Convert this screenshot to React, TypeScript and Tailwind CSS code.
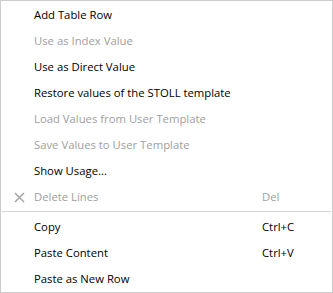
import React from "react";

type Item = { label: string; disabled?: boolean; shortcut?: string; icon?: boolean } | "sep";

const items: Item[] = [
  { label: "Add Table Row" },
  { label: "Use as Index Value", disabled: true },
  { label: "Use as Direct Value" },
  { label: "Restore values of the STOLL template" },
  { label: "Load Values from User Template", disabled: true },
  { label: "Save Values to User Template", disabled: true },
  { label: "Show Usage..." },
  { label: "Delete Lines", disabled: true, shortcut: "Del", icon: true },
  "sep",
  { label: "Copy", shortcut: "Ctrl+C" },
  { label: "Paste Content", shortcut: "Ctrl+V" },
  { label: "Paste as New Row" },
];

export default function App() {
  return (
    <div
      className="w-[333px] h-[293px] bg-white border border-[#cccccc] pt-px flex flex-col text-[11.3px]"
      style={{ fontFamily: '"Open Sans", "Noto Sans", sans-serif' }}
    >
      {items.map((it, i) =>
        it === "sep" ? (
          <div key={i} className="h-[4px] flex items-center pl-px pr-px">
            <div className="h-px w-full bg-[#d7d7d7] -mt-[2px]" />
          </div>
        ) : (
          <div
            key={i}
            className={`h-[26px] flex items-center shrink-0 ${it.disabled ? "text-[#a0a0a0]" : "text-black"}`}
          >
            <div className="w-[33px] flex items-center justify-center pl-px">
              {it.icon && (
                <svg width="11" height="11" viewBox="0 0 11 11" className="ml-[2px]">
                  <path d="M1 1 L10 10 M10 1 L1 10" stroke="#a8a8a8" strokeWidth="1.6" />
                </svg>
              )}
            </div>
            <div className="flex-1 whitespace-nowrap">{it.label}</div>
            {it.shortcut && <div className="w-[70px] whitespace-nowrap">{it.shortcut}</div>}
          </div>
        )
      )}
    </div>
  );
}
